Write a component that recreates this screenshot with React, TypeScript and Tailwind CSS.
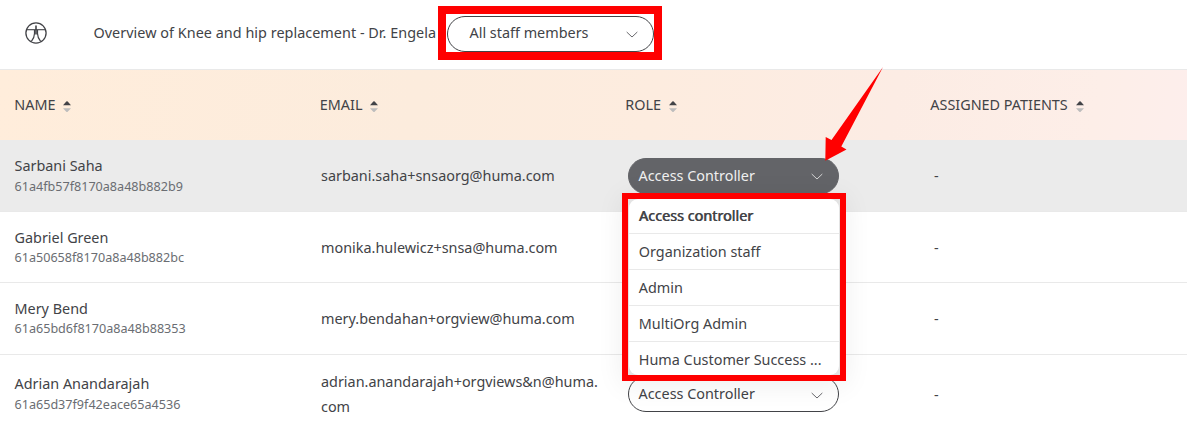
import React from "react";

type Staff = {
  name: string;
  id: string;
  email: string;
  height: string;
  active?: boolean;
  control?: "open" | "closed";
};

const staff: Staff[] = [
  { name: "Sarbani Saha", id: "61a4fb57f8170a8a48b882b9", email: "sarbani.saha+snsaorg@huma.com", height: "h-[72px]", active: true, control: "open" },
  { name: "Gabriel Green", id: "61a50658f8170a8a48b882bc", email: "monika.hulewicz+snsa@huma.com", height: "h-[71px]" },
  { name: "Mery Bend", id: "61a65bd6f8170a8a48b88353", email: "mery.bendahan+orgview@huma.com", height: "h-[72px]" },
  { name: "Adrian Anandarajah", id: "61a65d37f9f42eace65a4536", email: "adrian.anandarajah+orgviews&n@huma.com", height: "h-[79px]", control: "closed" },
];

const columns = ["NAME", "EMAIL", "ROLE", "ASSIGNED PATIENTS"];
const roles = ["Access controller", "Organization staff", "Admin", "MultiOrg Admin", "Huma Customer Success ..."];

function Chevron() {
  return (
    <svg className="mt-[2px] h-[7px] w-3 shrink-0" viewBox="0 0 12 7" fill="none" stroke="currentColor" strokeWidth="0.8">
      <path d="M.7 1 6 6l5.300-5" />
    </svg>
  );
}

function SortIcon() {
  return (
    <svg className="mt-[3px] h-3 w-2 shrink-0" viewBox="0 0 8 12">
      <path d="M0 4.200 3.300.6Q4 0 4.700.6L8 4.200Z" fill="#424347" />
      <path d="M0 7.200h8l-3.300 3.600Q4 11.400 3.300 10.800Z" fill="#bdbdbd" />
    </svg>
  );
}

function BodyIcon() {
  return (
    <svg className="h-[22px] w-[22px]" viewBox="0 0 22 22" fill="none" stroke="#424347" strokeWidth="1.300">
      <circle cx="11" cy="11" r="10.100" />
      <path d="M1.500 7.700h19" strokeWidth="1.100" />
      <path d="M11 3.500v9" strokeWidth="1.600" />
      <path d="M9.500 8v3.500Q9.500 15.500 6.400 19.300M12.500 8v3.500Q12.500 15.500 15.600 19.300" strokeWidth="1.200" />
    </svg>
  );
}

function RoleMenu() {
  return (
    <div className="absolute -left-[6px] top-[35px] z-10 h-[188px] w-[224px] border-[6px] border-[#ff0000] shadow-[0_4px_26px_rgba(0,0,0,0.07)]">
      <div className="h-full w-full overflow-hidden bg-[#e3e3e3]">
        <ul className="ml-px h-[176px] w-[210px] overflow-hidden rounded-[9px] bg-white">
          {roles.map((role, i) => (
            <li
              key={role}
              className={
                i === 0
                  ? "flex h-[35px] items-center border-b border-[#e9e9e9] pl-[9.800px] [text-shadow:0.6px_0_0_#424347]"
                  : "flex h-9 items-center border-b border-[#e9e9e9] pl-[9.800px] last:border-b-0"
              }
            >
              {role}
            </li>
          ))}
        </ul>
      </div>
    </div>
  );
}

function Arrow() {
  return (
    <svg className="absolute left-[824px] top-[67px] z-20 h-[94px] w-[60px]" viewBox="824 67 60 94">
      <path d="M883 67 841.300 146.500 846.500 149.500 825.300 160.800 825.700 137 831.500 140Z" fill="#ff0000" />
    </svg>
  );
}

export default function App() {
  return (
    <main className="relative h-[424px] w-[1187px] overflow-hidden bg-white font-['Noto_Sans',sans-serif] text-[14.4px] leading-[25px] text-[#424347]">
      <header className="flex h-[70px] items-center border-b border-[#e9e9e9] pb-[3px] pl-[25px]">
        <BodyIcon />
        <h1 className="mb-[2px] ml-[46.500px] w-[344.500px] whitespace-nowrap tracking-[0.03px]">Overview of Knee and hip replacement - Dr. Engela</h1>
        <div className="mb-px h-[54px] w-[224px] border-8 border-[#ff0000]">
          <button className="ml-[0.500px] mt-[2px] flex h-9 w-[207px] items-center justify-between rounded-full border border-[#424347] pl-[22px] pr-[14.500px]">
            <span className="-mt-[2px]">All staff members</span>
            <Chevron />
          </button>
        </div>
      </header>

      <div className="grid h-[70px] grid-cols-[305.500px_305.500px_305px_1fr] items-center bg-[linear-gradient(100deg,#ffeddb_0%,#fcecdd_35%,#fdecdf_55%,#fcece4_75%,#fdeee8_92%,#fdeeec_100%)]">
        {columns.map((label) => (
          <div key={label} className="flex items-center gap-2 pl-[14.300px]">
            <span className="-mt-[2px]">{label}</span>
            <SortIcon />
          </div>
        ))}
      </div>

      {staff.map((person) => (
        <div
          key={person.id}
          className={`grid grid-cols-[305.500px_305.500px_305px_1fr] items-center border-b border-[#e9e9e9] ${person.height} ${person.active ? "bg-[#ebebeb]" : ""}`}
        >
          <div className="flex flex-col pl-[14.500px]">
            <span className={person.control === "closed" ? "-mt-px leading-[21px]" : "leading-[21px]"}>{person.name}</span>
            <span className={`text-[12.600px] leading-5 text-[#6a6d72] ${person.control ? "-mb-px pt-px" : ""}`}>{person.id}</span>
          </div>
          <div className="w-[294px] break-all pl-[15.500px]">{person.email}</div>
          <div className="pl-[17px]">
            {person.control && (
              <div className="relative w-[211px]">
                <button
                  className={`flex h-9 w-full items-center justify-between rounded-full border pl-[9.500px] pr-[14.800px] ${person.control === "open" ? "border-[#636468] bg-[#636468] text-[#f0f0f0]" : "border-[#424347]"}`}
                >
                  <span className={person.control === "closed" ? "-mt-[2px]" : ""}>Access Controller</span>
                  <Chevron />
                </button>
                {person.control === "open" && <RoleMenu />}
              </div>
            )}
          </div>
          <div className="pl-[18px]">-</div>
        </div>
      ))}

      <Arrow />
    </main>
  );
}
